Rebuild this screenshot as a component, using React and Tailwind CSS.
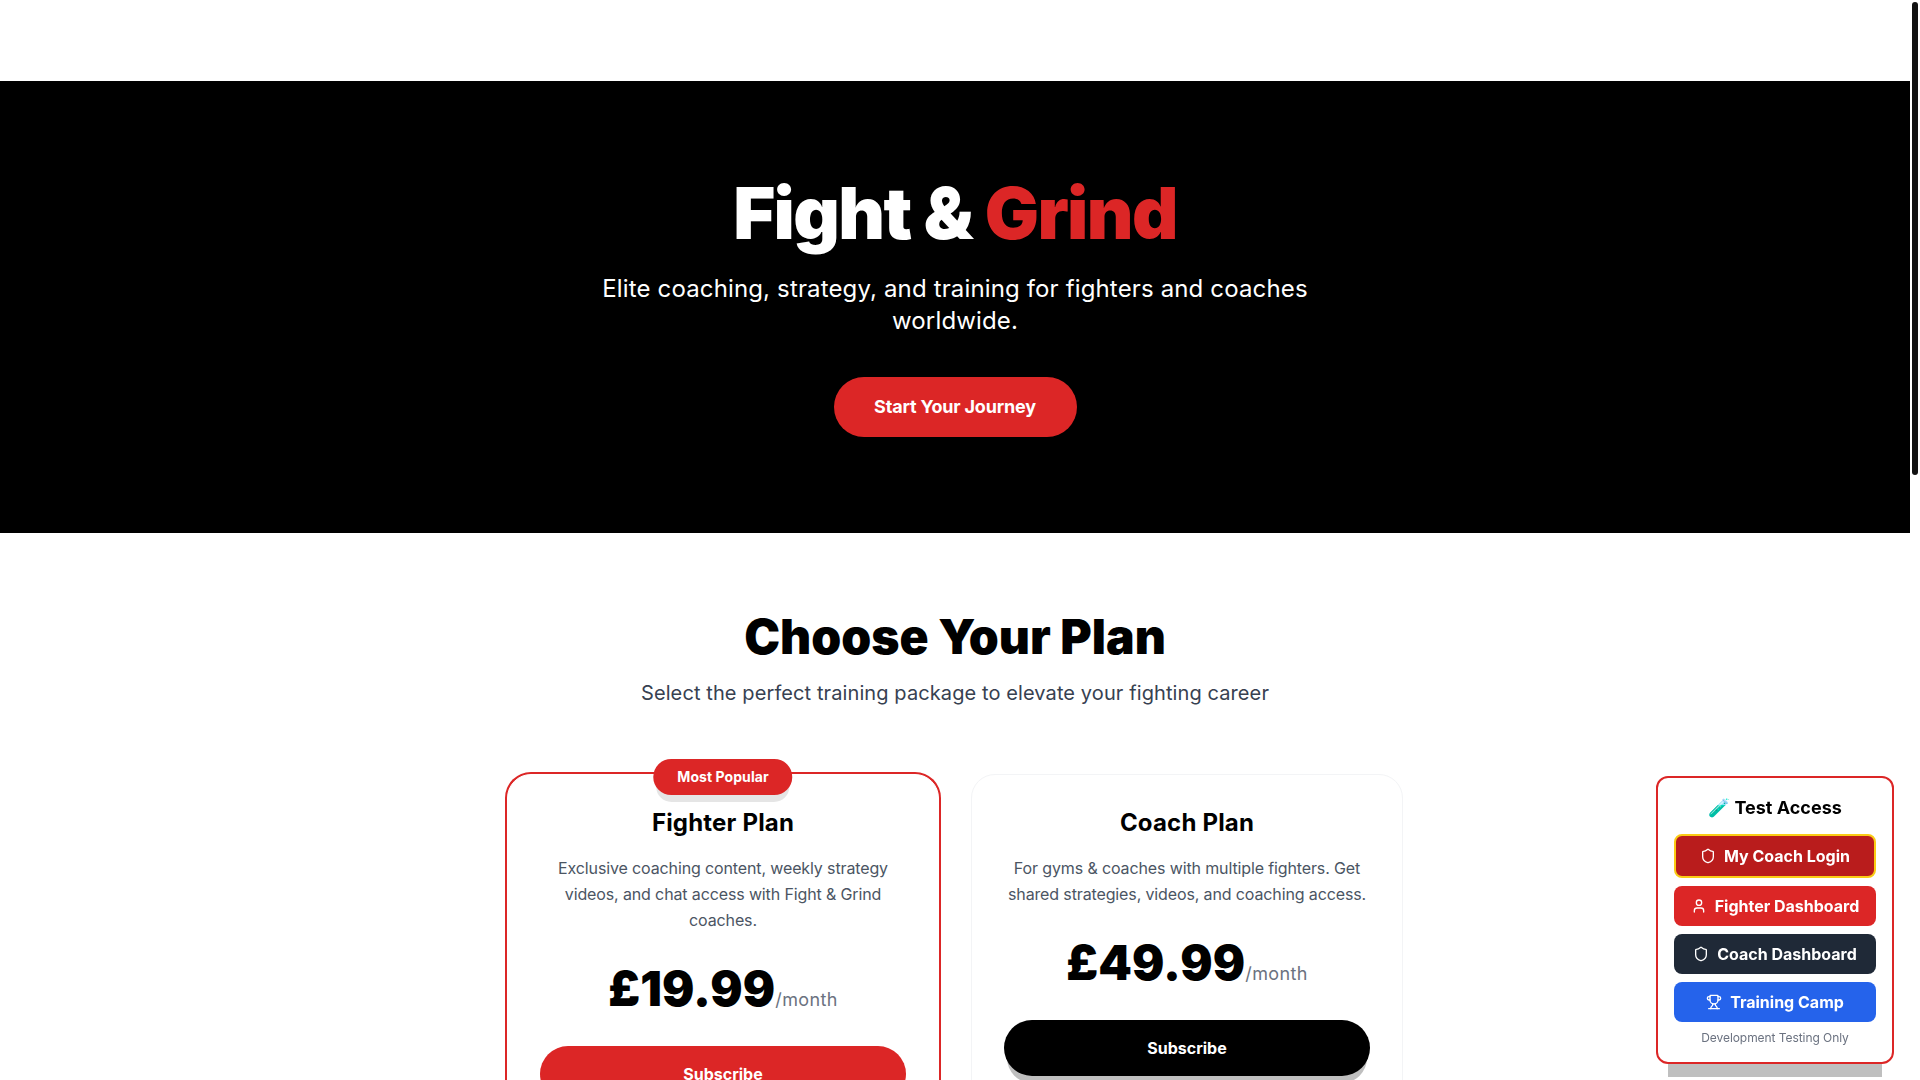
import React from "react";
import { Shield, User, Trophy } from "lucide-react";

const plans = [
  {
    name: "Fighter Plan",
    description: "Exclusive coaching content, weekly strategy videos, and chat access with Fight & Grind coaches.",
    price: "£19.99",
    popular: true,
  },
  {
    name: "Coach Plan",
    description: "For gyms & coaches with multiple fighters. Get shared strategies, videos, and coaching access.",
    price: "£49.99",
    popular: false,
  },
];

const testLinks = [
  { label: "Fighter Dashboard", icon: User, className: "bg-[#dc2626]" },
  { label: "Coach Dashboard", icon: Shield, className: "bg-[#1f2937]" },
  { label: "Training Camp", icon: Trophy, className: "bg-[#2563eb]" },
];

const TestAccess = () => (
  <div className="fixed bottom-4 right-[26px] z-50 w-[238px] rounded-xl border-2 border-[#dc2626] bg-white p-4 shadow-[0_25px_0_-12px_rgba(0,0,0,0.25)]">
    <h3 className="mb-3 text-center text-lg font-bold leading-7 text-black">🧪 Test Access</h3>
    <div className="flex flex-col gap-2">
      <button className="flex h-11 items-center justify-center gap-2 rounded-lg border-2 border-[#facc15] bg-[#b91c1c] text-base font-bold text-white">
        <Shield className="h-4 w-4" />
        My Coach Login
      </button>
      {testLinks.map((link) => (
        <button key={link.label} className={`flex h-10 items-center justify-center gap-2 rounded-lg text-base font-bold text-white ${link.className}`}>
          <link.icon className="h-4 w-4" />
          {link.label}
        </button>
      ))}
    </div>
    <p className="mt-2 text-center text-xs leading-4 tracking-[-0.005em] text-[#6b7280]">Development Testing Only</p>
  </div>
);

const App = () => {
  return (
    <div className="flex h-screen overflow-hidden bg-white font-['Inter',sans-serif]">
      <main className="min-w-0 flex-1">
        <div className="h-[81px] bg-white" />

        {/* Hero */}
        <section className="flex h-[452px] flex-col items-center bg-black pt-24 text-center">
          <h1 className="mb-6 text-7xl font-black tracking-[-0.022em] text-white">
            Fight &amp; <span className="text-[#dc2626]">Grind</span>
          </h1>
          <p className="mb-10 max-w-3xl text-2xl tracking-[0.006em] text-white">
            Elite coaching, strategy, and training for fighters and coaches worldwide.
          </p>
          <button className="h-[60px] w-[243px] rounded-full bg-[#dc2626] text-lg font-bold tracking-[-0.01em] text-white">Start Your Journey</button>
        </section>

        {/* Plans */}
        <section className="pt-20">
          <div className="mb-[67px] text-center">
            <h2 className="mb-[18px] text-5xl font-black text-black">Choose Your Plan</h2>
            <p className="text-xl tracking-[0.005em] text-[#374151]">Select the perfect training package to elevate your fighting career</p>
          </div>
          <div className="mx-auto grid max-w-4xl grid-cols-2 items-start gap-8">
            {plans.map((plan) => (
              <div
                key={plan.name}
                className={`relative rounded-3xl border bg-white p-8 text-center ${plan.popular ? "border-white ring-2 ring-[#dc2626]" : "border-[#f3f4f6]"}`}
              >
                {plan.popular && (
                  <span className="absolute -top-4 left-1/2 -translate-x-1/2 rounded-full bg-[#dc2626] px-6 py-2 text-sm font-bold tracking-[0.005em] text-white shadow-[0_10px_0_-3px_rgba(0,0,0,0.1)]">
                    Most Popular
                  </span>
                )}
                <h3 className="mb-4 text-2xl font-bold tracking-[0.008em] text-black">{plan.name}</h3>
                <p className="mb-6 leading-[26px] tracking-[-0.008em] text-[#4b5563]">{plan.description}</p>
                <div className="mb-8 flex items-baseline justify-center pt-2">
                  <span className="text-5xl font-black tracking-[0.003em] text-black">{plan.price}</span>
                  <span className="text-lg tracking-[0.02em] text-[#6b7280]">/month</span>
                </div>
                <button className={`h-14 w-full rounded-full font-bold text-white shadow-[0_10px_0_-3px_rgba(0,0,0,0.25)] ${plan.popular ? "bg-[#dc2626]" : "bg-black"}`}>
                  Subscribe
                </button>
              </div>
            ))}
          </div>
        </section>
      </main>

      {/* Scrollbar */}
      <aside className="w-[10px] shrink-0 pt-[2px] pl-[2px]">
        <div className="h-[473px] w-[6px] rounded-full bg-[#111111]" />
      </aside>

      <TestAccess />
    </div>
  );
};

export default App;
